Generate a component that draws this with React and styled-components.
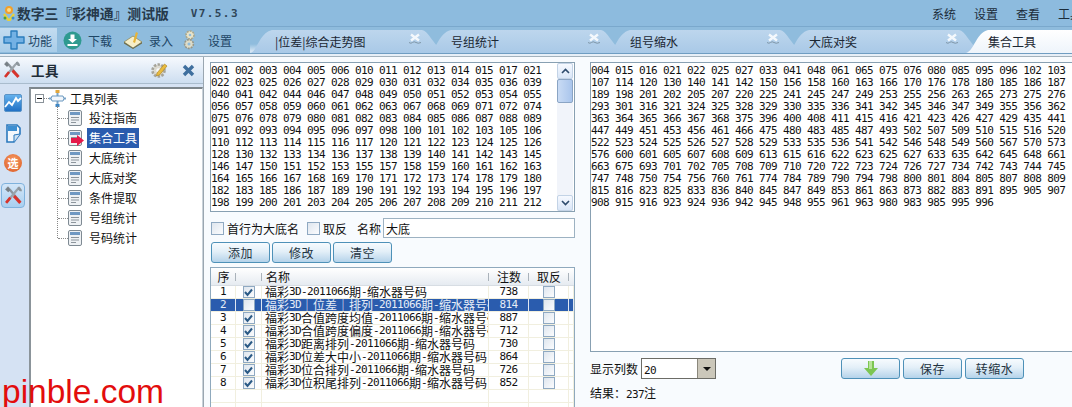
import React from 'react';
import styled, { createGlobalStyle } from 'styled-components';

const CJK = `"Noto Sans CJK SC", "Liberation Sans", sans-serif`;
const MONO = `"DejaVu Sans Mono", "Liberation Mono", monospace`;

const leftNumbers = [
    '001 002 003 004 005 006 010 011 012 013 014 015 017 021',
    '022 023 025 026 027 028 029 030 031 032 034 035 036 039',
    '040 041 042 044 046 047 048 049 050 051 052 053 054 055',
    '056 057 058 059 060 061 062 063 067 068 069 071 072 074',
    '075 076 078 079 080 081 082 083 084 085 086 087 088 089',
    '091 092 093 094 095 096 097 098 100 101 102 103 105 106',
    '110 112 113 114 115 116 117 120 121 122 123 124 125 126',
    '128 130 132 133 134 136 137 138 139 140 141 142 143 145',
    '146 147 150 151 152 153 155 157 158 159 160 161 162 163',
    '164 165 166 167 168 169 170 171 172 173 174 178 179 180',
    '182 183 185 186 187 189 190 191 192 193 194 195 196 197',
    '198 199 200 201 203 204 205 206 207 208 209 210 211 212',
];

const rightNumbers = [
    '004 015 016 021 022 025 027 033 041 048 061 065 075 076 080 085 095 096 102 103',
    '107 114 120 130 140 141 142 150 156 158 160 163 166 170 176 178 180 185 186 187',
    '189 198 201 202 205 207 220 225 241 245 247 249 253 255 256 263 265 273 275 276',
    '293 301 316 321 324 325 328 329 330 335 336 341 342 345 346 347 349 355 356 362',
    '363 364 365 366 367 368 375 396 400 408 411 415 416 421 423 426 427 429 435 441',
    '447 449 451 453 456 461 466 475 480 483 485 487 493 502 507 509 510 515 516 520',
    '522 523 524 525 526 527 528 529 533 535 536 541 542 546 548 549 560 567 570 573',
    '576 600 601 605 607 608 609 613 615 616 622 623 625 627 633 635 642 645 648 661',
    '663 675 693 701 702 705 708 709 710 720 722 723 724 726 727 734 742 743 744 745',
    '747 748 750 754 756 760 761 774 784 789 790 794 798 800 801 804 805 807 808 809',
    '815 816 823 825 833 836 840 845 847 849 853 861 863 873 882 883 891 895 905 907',
    '908 915 916 923 924 936 942 945 948 955 961 963 980 983 985 995 996',
];

const schemes = [
    { id: 1, name: '福彩3D-2011066期-缩水器号码', count: 738, checked: true },
    { id: 2, name: '福彩3D｜位差｜排列-2011066期-缩水器号码', count: 814, checked: false, selected: true },
    { id: 3, name: '福彩3D合值跨度均值-2011066期-缩水器号码', count: 887, checked: true },
    { id: 4, name: '福彩3D合值跨度偏度-2011066期-缩水器号码', count: 712, checked: true },
    { id: 5, name: '福彩3D距离排列-2011066期-缩水器号码', count: 730, checked: true },
    { id: 6, name: '福彩3D位差大中小-2011066期-缩水器号码', count: 864, checked: true },
    { id: 7, name: '福彩3D位合排列-2011066期-缩水器号码', count: 726, checked: true },
    { id: 8, name: '福彩3D位积尾排列-2011066期-缩水器号码', count: 852, checked: true },
];

const treeItems = ['投注指南', '集合工具', '大底统计', '大底对奖', '条件提取', '号组统计', '号码统计'];
const tabs = ['|位差|综合走势图', '号组统计', '组号缩水', '大底对奖'];

const GlobalStyle = createGlobalStyle`
    html, body {
        margin: 0;
        padding: 0;
        overflow: hidden;
        background: #f8fbfe;
    }
`;

const Shell = styled.div`
    position: relative;
    width: 1072px;
    height: 407px;
    overflow: hidden;
    display: flex;
    flex-direction: column;
    background: #f8fbfe;
    color: #111;
    font-family: ${CJK};
    font-size: 12px;
`;

const TitleBar = styled.div`
    height: 27px;
    flex: none;
    display: flex;
    align-items: center;
    padding-left: 3px;
    background: #8dbbde;
    border-bottom: 1px solid #7aa8cc;
    box-sizing: border-box;
`;

const AppName = styled.div`
    margin-left: 1px;
    font-size: 13.8px;
    font-weight: 700;
    color: #26394b;
    white-space: pre;
`;

const Version = styled.div`
    margin-left: 22px;
    font-family: ${MONO};
    font-size: 11px;
    font-weight: 700;
    letter-spacing: 1.4px;
    color: #2f4557;
`;

const Menu = styled.nav`
    margin-left: auto;
    margin-right: -10px;
    display: flex;
    gap: 18px;
    color: #1c2c3a;
`;

const ToolRow = styled.div`
    height: 27px;
    flex: none;
    display: flex;
    background: #8fbcdd;
    border-bottom: 1px solid #6f9dc2;
    box-sizing: border-box;
    overflow: hidden;
`;

const ToolButtons = styled.div`
    width: 250px;
    flex: none;
    display: flex;
    align-items: center;
`;

const ToolButton = styled.div`
    height: 24px;
    width: ${({ $width }) => $width}px;
    flex: none;
    display: flex;
    align-items: center;
    gap: ${({ $gap }) => $gap}px;
    padding-left: ${({ $pad }) => $pad}px;
    box-sizing: border-box;
    color: #1e4666;
    background: ${({ $active }) => ($active ? 'linear-gradient(#c3dcf0, #a9cde9)' : 'none')};
`;

const TabStrip = styled.div`
    flex: 1;
    display: flex;
    align-items: flex-end;
    background: linear-gradient(#8fbcdd 0, #8fbcdd 17px, #d3e4f3 24px);
`;

const Tab = styled.div`
    width: 193px;
    height: 23px;
    flex: none;
    margin-right: -14px;
    display: flex;
    align-items: center;
    padding-left: ${({ $pad }) => $pad}px;
    box-sizing: border-box;
    position: relative;
    color: #1b2733;
    background: linear-gradient(#bdd6ed, #a9c9e7);
    clip-path: path('M0 23 C7 22 9 3 22 0 L172 0 C178 1 183 13 193 23 Z');
`;

const ActiveTab = styled(Tab)`
    width: 120px;
    margin-right: 0;
    background: linear-gradient(#ffffff, #eef4fb);
    clip-path: path('M0 23 C8 21 10 3 22 0 L120 0 L120 23 Z');
`;

const TabClose = styled.svg`
    position: absolute;
    right: 21px;
    top: 3px;
    width: 14px;
    height: 12px;
`;

const Rule = styled.div`
    height: 2px;
    flex: none;
    background: #e7eff7;
    border-bottom: 1px solid #a3b2bd;
`;

const Body = styled.div`
    flex: 1;
    display: flex;
    min-height: 0;
`;

const LeftPanel = styled.aside`
    width: 204px;
    flex: none;
    display: flex;
    flex-direction: column;
    border-right: 1px solid #9aa6b0;
    box-sizing: border-box;
`;

const PanelHeader = styled.div`
    height: 27px;
    flex: none;
    display: flex;
    align-items: center;
    padding-left: 3px;
    background: linear-gradient(#f6f9fd, #cddef0);
    border-bottom: 1px solid #a9bccd;
    box-sizing: border-box;
`;

const PanelTitle = styled.div`
    margin-left: 10px;
    font-size: 13.5px;
    font-weight: 700;
    letter-spacing: 0.5px;
    color: #1e2c38;
`;

const PanelGear = styled.svg`
    margin-left: auto;
    width: 18px;
    height: 18px;
`;

const PanelClose = styled.svg`
    margin: 0 8px 0 14px;
    width: 13px;
    height: 13px;
`;

const PanelBody = styled.div`
    flex: 1;
    display: flex;
    min-height: 0;
    background: #d5e2f3;
`;

const SideBar = styled.div`
    width: 29px;
    flex: none;
    display: flex;
    flex-direction: column;
    align-items: flex-start;
    padding: 4px 0 0 1px;
    box-sizing: border-box;
`;

const SideButton = styled.div`
    width: 24px;
    height: ${({ $height }) => $height}px;
    flex: none;
    display: flex;
    align-items: center;
    justify-content: center;
    box-sizing: border-box;
    border-radius: 4px;
    ${({ $active }) => $active && `
        margin-top: 5px;
        background: linear-gradient(#d3e6f8, #a8cff0);
        border: 1px solid #7fb2dd;
    `}
`;

const ElectBadge = styled.div`
    width: 18px;
    height: 18px;
    border-radius: 50%;
    background: radial-gradient(circle at 50% 35%, #f59a62, #dc5a24);
    color: #fff;
    font-size: 11px;
    font-weight: 700;
    line-height: 18px;
    text-align: center;
`;

const TreeBox = styled.div`
    flex: 1;
    margin-top: 3px;
    background: #fff;
    border-top: 2px solid #7d868c;
    border-left: 2px solid #8b949a;
    border-right: 1px solid #c9d2da;
    box-sizing: border-box;
    padding: 0 0 0 4px;
`;

const TreeRoot = styled.div`
    height: 20px;
    margin-top: -1px;
    display: flex;
    align-items: center;
`;

const Expander = styled.div`
    width: 7px;
    height: 7px;
    flex: none;
    border: 1px solid #8a9299;
    display: flex;
    align-items: center;
    justify-content: center;
    &::after {
        content: '';
        width: 5px;
        height: 1px;
        background: #111;
    }
`;

const RootLink = styled.div`
    width: 5px;
    flex: none;
    border-top: 1px dotted #888;
`;

const RootLabel = styled.span`
    margin-left: 4px;
`;

const TreeList = styled.div`
    position: relative;
    margin-left: 22px;
    &::before {
        content: '';
        position: absolute;
        left: 0;
        top: -2px;
        bottom: 10px;
        border-left: 1px dotted #888;
    }
`;

const TreeItem = styled.div`
    height: 20px;
    display: flex;
    align-items: center;
    &::before {
        content: '';
        width: 10px;
        flex: none;
        margin-left: 1px;
        border-top: 1px dotted #888;
    }
`;

const TreeIconWrap = styled.div`
    position: relative;
    width: 14px;
    height: 16px;
    flex: none;
`;

const TreeArrow = styled.svg`
    position: absolute;
    left: 3px;
    top: 5px;
    width: 13px;
    height: 11px;
`;

const TreeLabel = styled.span`
    margin-left: 5px;
    padding: 0 2px;
    height: 20px;
    line-height: 20px;
    ${({ $selected }) => $selected && 'background: #2a5cae; color: #fff;'}
`;

const Center = styled.main`
    width: 379px;
    flex: none;
    padding: 5px 8px 0 6px;
    box-sizing: border-box;
    display: flex;
    flex-direction: column;
`;

const ListBox = styled.div`
    height: 150px;
    flex: none;
    display: flex;
    background: #fff;
    border: 1px solid #88a0b2;
    box-sizing: border-box;
`;

const NumberArea = styled.div`
    flex: 1;
    padding-top: 2px;
`;

const NumberLine = styled.div`
    height: 12px;
    font-family: ${MONO};
    font-size: 11px;
    letter-spacing: -0.62px;
    line-height: 12px;
    white-space: pre;
    color: #111;
`;

const ScrollTrack = styled.div`
    width: 16px;
    margin-right: 1px;
    flex: none;
    display: flex;
    flex-direction: column;
    background: #f1f4fa;
`;

const ScrollButton = styled.div`
    height: 16px;
    flex: none;
    display: flex;
    align-items: center;
    justify-content: center;
    box-sizing: border-box;
    background: linear-gradient(#f6f9ff, #d9e6f7);
    border: 1px solid #c3d3e6;
    border-radius: 2px;
`;

const ScrollThumb = styled.div`
    height: 24px;
    flex: none;
    box-sizing: border-box;
    background: linear-gradient(90deg, #c9dbf4, #a9c5ec);
    border: 1px solid #8aa4c4;
    border-radius: 2px;
`;

const ScrollGap = styled.div`
    flex: 1;
`;

const OptionRow = styled.div`
    height: 20px;
    flex: none;
    margin-top: 6px;
    display: flex;
    align-items: center;
    padding-left: 1px;
`;

const Box = styled.span`
    width: ${({ $size }) => $size || 13}px;
    height: ${({ $size }) => $size || 13}px;
    flex: none;
    margin-left: ${({ $left }) => $left || 0}px;
    display: inline-flex;
    align-items: center;
    justify-content: center;
    box-sizing: border-box;
    border: 1px solid #8fa9c2;
    background: linear-gradient(135deg, #dfe6ee, #fbfcfe);
`;

const OptionLabel = styled.span`
    margin-left: ${({ $left }) => $left}px;
    white-space: nowrap;
`;

const NameInput = styled.div`
    flex: 1;
    height: 20px;
    margin-left: 2px;
    padding-left: 2px;
    line-height: 19px;
    box-sizing: border-box;
    background: #fff;
    border: 1px solid #9db2c2;
`;

const ButtonRow = styled.div`
    height: 21px;
    flex: none;
    margin-top: 4px;
    display: flex;
    gap: 2px;
    padding-left: 1px;
`;

const Btn = styled.div`
    width: 59px;
    height: 21px;
    flex: none;
    display: flex;
    align-items: center;
    justify-content: center;
    box-sizing: border-box;
    border: 1px solid #4e91b8;
    border-radius: 3px;
    background: linear-gradient(#f7fbfe, #e3eff8 45%, #b5d3ea);
    color: #23333f;
    letter-spacing: 0.5px;
`;

const Table = styled.div`
    flex: 1;
    margin-top: 4px;
    background: #fff;
    border: 1px solid #8fa9bd;
    border-bottom: none;
    box-sizing: border-box;
`;

const columns = '25px 26px 227px 40px 40px 1fr';

const HeaderRow = styled.div`
    height: 18px;
    display: grid;
    grid-template-columns: ${columns};
    background: linear-gradient(#ffffff, #e6ebf1);
    border-bottom: 1px solid #d7dde3;
    box-sizing: border-box;
`;

const HeaderCell = styled.div`
    display: flex;
    align-items: center;
    justify-content: ${({ $left }) => ($left ? 'flex-start' : 'center')};
    padding-left: ${({ $left }) => ($left ? 4 : 0)}px;
    position: relative;
    &:not(:last-child)::after {
        content: '';
        position: absolute;
        right: 0;
        top: 5px;
        height: 8px;
        border-right: 1px solid #aab2ba;
    }
`;

const Row = styled.div`
    height: 13px;
    display: grid;
    grid-template-columns: ${columns};
    box-sizing: border-box;
    border-bottom: 1px solid #f1efdf;
    background: ${({ $selected }) => ($selected ? '#2a5cae' : '#fff')};
    color: ${({ $selected }) => ($selected ? '#e6edf7' : '#111')};
`;

const Cell = styled.div`
    display: flex;
    align-items: center;
    justify-content: center;
    overflow: hidden;
    white-space: pre;
    line-height: 12px;
    border-right: 1px solid ${({ $selected }) => ($selected ? '#dfe7f2' : '#f1efdf')};
`;

const NameCell = styled(Cell)`
    justify-content: flex-start;
    padding-left: 3px;
`;

const Latin = styled.span`
    font-family: ${MONO};
    font-size: 11px;
    letter-spacing: -0.62px;
`;

const BottomBar = styled.div`
    height: 21px;
    margin-top: 6px;
    padding-right: 48px;
    display: flex;
    align-items: center;
`;

const SelectBox = styled.div`
    width: 75px;
    height: 21px;
    margin-left: 3px;
    display: flex;
    box-sizing: border-box;
    background: #fff;
    border: 1px solid #6c6c66;
`;

const SelectValue = styled.div`
    flex: 1;
    padding-left: 2px;
    line-height: 19px;
`;

const SelectArrow = styled.div`
    width: 17px;
    display: flex;
    align-items: center;
    justify-content: center;
    background: #cbc7ba;
    border-left: 1px solid #8a877c;
    &::after {
        content: '';
        border: 4px solid transparent;
        border-top: 4px solid #111;
        border-bottom: none;
    }
`;

const ActionGroup = styled.div`
    margin-left: auto;
    display: flex;
    gap: 3px;
`;

const ResultLine = styled.div`
    margin-top: 5px;
    height: 18px;
    line-height: 18px;
`;

const RightPane = styled.section`
    flex: 1;
    padding: 5px 0 0 7px;
    min-width: 0;
    display: flex;
    flex-direction: column;
`;

const OutputBox = styled.div`
    height: 290px;
    flex: none;
    background: #fff;
    border-top: 1px solid #88a0b2;
    border-left: 1px solid #88a0b2;
    border-bottom: 1px solid #88a0b2;
    box-sizing: border-box;
    padding-top: 2px;
`;

const Watermark = styled.div`
    position: absolute;
    left: 2px;
    bottom: -4px;
    font-family: "Liberation Sans", Arial, sans-serif;
    font-size: 33.5px;
    line-height: 38px;
    color: #e30d0d;
`;

// ascii runs in the old ui are half width, so they get the small mono face
function Mixed({ text }) {
    return text.split(/([\x20-\x7e]+)/).map((part, i) =>
        /^[\x20-\x7e]+$/.test(part) ? <Latin key={i}>{part}</Latin> : part
    );
}

function LogoIcon() {
    return (
        <svg width="13" height="16" viewBox="0 0 13 16">
            <circle cx="6" cy="5" r="4" fill="#f1a02c" />
            <circle cx="6" cy="5" r="2" fill="#fbdc8a" />
            <path d="M1 9 L6 16 L11 9" fill="none" stroke="#e8d13a" strokeWidth="2.4" />
            <circle cx="2" cy="13" r="1.5" fill="#4f9f3c" />
            <circle cx="10" cy="13" r="1.5" fill="#3b8fd0" />
        </svg>
    );
}

function PlusIcon() {
    return (
        <svg width="22" height="20" viewBox="0 0 22 20">
            <path d="M8 1 H14 V7 H21 V13 H14 V19 H8 V13 H1 V7 H8 Z" fill="#73b1e4" stroke="#2b7dbd" strokeWidth="1.4" strokeLinejoin="round" />
        </svg>
    );
}

function DownloadIcon() {
    return (
        <svg width="19" height="19" viewBox="0 0 19 19">
            <circle cx="9.5" cy="9.5" r="9" fill="#2f9a90" />
            <path d="M7.5 3.5 H11.5 V8 H14 L9.5 12 L5 8 H7.5 Z" fill="#fff" />
            <rect x="4.5" y="13" width="10" height="2" fill="#fff" />
        </svg>
    );
}

function EntryIcon() {
    return (
        <svg width="20" height="18" viewBox="0 0 20 18">
            <path d="M1 11 L10 5 L19 11 L10 17 Z" fill="#f6eec8" stroke="#8f8a5c" strokeWidth="0.8" />
            <path d="M10 11 L13 1 L15 2 L12 12 Z" fill="#e6b437" />
            <path d="M1 11 L10 17 L19 11 V12.5 L10 18 L1 12.5 Z" fill="#6d6b49" />
        </svg>
    );
}

function GearsIcon() {
    return (
        <svg width="14" height="20" viewBox="0 0 14 20">
            <circle cx="7" cy="5" r="4" fill="#e9e4c9" stroke="#a8a68c" strokeWidth="1.6" strokeDasharray="2 1" />
            <circle cx="7" cy="5" r="1.3" fill="#8fbcdd" />
            <circle cx="6" cy="14" r="4.4" fill="#dedcc8" stroke="#96978a" strokeWidth="1.6" strokeDasharray="2 1" />
            <circle cx="6" cy="14" r="1.5" fill="#8fbcdd" />
        </svg>
    );
}

function CloseMark() {
    return (
        <TabClose viewBox="0 0 14 12">
            <path d="M3 1.5 L11 7.5 M11 1.5 L3 7.5" stroke="#f4f8fc" strokeWidth="2.4" />
            <path d="M1 9.5 Q3 11 4.5 9.5 T8 9.5 T13 9.5" fill="none" stroke="#7f96a8" strokeWidth="1" />
        </TabClose>
    );
}

function ToolsIcon({ size = 18 }) {
    return (
        <svg width={size} height={size} viewBox="0 0 18 18">
            <path d="M3 1 L6 4 L15 15" stroke="#8d969d" strokeWidth="2.2" fill="none" />
            <path d="M1 3 L4 1 L6 4 L4 6 Z" fill="#777f85" />
            <path d="M15 1 L12 4 L3 15" stroke="#9aa3aa" strokeWidth="2.2" fill="none" />
            <path d="M13 1 A4 4 0 0 1 17 5 L15 5 L13 3 Z" fill="#8d969d" />
            <path d="M9.5 9.5 L15.5 16" stroke="#d8342c" strokeWidth="3" />
            <path d="M6 11 L2 16" stroke="#d8342c" strokeWidth="2.6" />
        </svg>
    );
}

function GearPencil() {
    return (
        <PanelGear viewBox="0 0 18 18">
            <circle cx="8.5" cy="9.5" r="6" fill="#dcdad0" stroke="#a6a49a" strokeWidth="2.6" strokeDasharray="2.4 1.4" />
            <circle cx="8.5" cy="9.5" r="2.2" fill="#f6f9fd" />
            <path d="M7 12 L14.5 3 L17 5 L9.5 14 L6.5 15 Z" fill="#e9bb3f" stroke="#a67d1a" strokeWidth="0.6" />
        </PanelGear>
    );
}

function ChartIcon() {
    return (
        <svg width="18" height="18" viewBox="0 0 18 18">
            <defs>
                <linearGradient id="chartFill" x1="0" y1="0" x2="0" y2="1">
                    <stop offset="0" stopColor="#66b3ee" />
                    <stop offset="1" stopColor="#1f6fc4" />
                </linearGradient>
            </defs>
            <rect x="0.5" y="0.5" width="17" height="17" rx="1.5" fill="url(#chartFill)" stroke="#5a93c6" />
            <path d="M1 13 L5 8 L8 11 L12 4 L14 7 L17 4" fill="none" stroke="#fff" strokeWidth="1.8" />
        </svg>
    );
}

function SideDocIcon() {
    return (
        <svg width="17" height="19" viewBox="0 0 17 19">
            <path d="M2 1 H12 L15 4 V10 L9 18 H2 Z" fill="#f4f8fc" stroke="#2b79bd" strokeWidth="1.6" />
            <rect x="3" y="2" width="9" height="5" fill="#3d8fd2" />
            <path d="M9 18 L9 11 L15 10" fill="#cfe2f2" stroke="#2b79bd" />
        </svg>
    );
}

function RootIcon() {
    return (
        <svg width="17" height="17" viewBox="0 0 17 17">
            <path d="M8.5 0 V17 M0 8.5 H17" stroke="#7ba5c9" strokeWidth="2" />
            <path d="M3 6 H14 L15 8.5 L14 11 H3 L2 8.5 Z" fill="#f1f6fb" stroke="#6a98bf" />
            <rect x="6.5" y="0" width="4" height="3" fill="#e1a63c" />
            <rect x="6.5" y="14" width="4" height="3" fill="#3f86c4" />
        </svg>
    );
}

function DocIcon() {
    return (
        <svg width="14" height="16" viewBox="0 0 14 16">
            <rect x="0.5" y="0.5" width="13" height="15" rx="1.5" fill="#eef1f4" stroke="#7f8a93" />
            <rect x="2" y="2" width="10" height="3" fill="#6f98c2" />
            <path d="M3 7.5 H11 M3 10 H11 M3 12.5 H8" stroke="#8d959c" strokeWidth="1" />
        </svg>
    );
}

function Chevron({ up }) {
    return (
        <svg width="9" height="6" viewBox="0 0 9 6">
            <path d={up ? 'M1 5 L4.5 1.5 L8 5' : 'M1 1 L4.5 4.5 L8 1'} fill="none" stroke="#2c4a6c" strokeWidth="1.6" />
        </svg>
    );
}

function Tick() {
    return (
        <svg width="9" height="9" viewBox="0 0 9 9">
            <path d="M1 4 L3.5 7 L8 1.5" fill="none" stroke="#2b5a86" strokeWidth="2" />
        </svg>
    );
}

function GreenDown() {
    return (
        <svg width="14" height="15" viewBox="0 0 14 15">
            <path d="M4 0 H10 V7 H14 L7 15 L0 7 H4 Z" fill="#7cc653" />
            <path d="M5 0 H8 V8 H5 Z" fill="#b8e49a" />
        </svg>
    );
}

function App() {
    return (
        <Shell>
            <GlobalStyle />
            <TitleBar>
                <LogoIcon />
                <AppName>数字三『彩神通』测试版</AppName>
                <Version>V7.5.3</Version>
                <Menu>
                    <span>系统</span>
                    <span>设置</span>
                    <span>查看</span>
                    <span>工具</span>
                </Menu>
            </TitleBar>
            <ToolRow>
                <ToolButtons>
                    <ToolButton $active $width={57} $gap={3} $pad={3}><PlusIcon />功能</ToolButton>
                    <ToolButton $width={66} $gap={6} $pad={6}><DownloadIcon />下载</ToolButton>
                    <ToolButton $width={60} $gap={6} $pad={0}><EntryIcon />录入</ToolButton>
                    <ToolButton $width={67} $gap={11} $pad={0}><GearsIcon />设置</ToolButton>
                </ToolButtons>
                <TabStrip>
                    {tabs.map((t, i) => (
                        <Tab key={t} $pad={i === 0 ? 25 : 22}>{t}<CloseMark /></Tab>
                    ))}
                    <ActiveTab $pad={22}>集合工具</ActiveTab>
                </TabStrip>
            </ToolRow>
            <Rule />
            <Body>
                <LeftPanel>
                    <PanelHeader>
                        <ToolsIcon />
                        <PanelTitle>工具</PanelTitle>
                        <GearPencil />
                        <PanelClose viewBox="0 0 13 13">
                            <path d="M2 2 L11 11 M11 2 L2 11" stroke="#3f6f9e" strokeWidth="3.4" />
                        </PanelClose>
                    </PanelHeader>
                    <PanelBody>
                        <SideBar>
                            <SideButton $height={30}><ChartIcon /></SideButton>
                            <SideButton $height={30}><SideDocIcon /></SideButton>
                            <SideButton $height={30}><ElectBadge>选</ElectBadge></SideButton>
                            <SideButton $active $height={25}><ToolsIcon size={19} /></SideButton>
                        </SideBar>
                        <TreeBox>
                            <TreeRoot>
                                <Expander />
                                <RootLink />
                                <RootIcon />
                                <RootLabel>工具列表</RootLabel>
                            </TreeRoot>
                            <TreeList>
                                {treeItems.map((item) => (
                                    <TreeItem key={item}>
                                        <TreeIconWrap>
                                            <DocIcon />
                                            {item === '集合工具' && (
                                                <TreeArrow viewBox="0 0 13 11">
                                                    <path d="M0 3 H6 V0 L13 5.5 L6 11 V8 H0 Z" fill="#e5194a" />
                                                </TreeArrow>
                                            )}
                                        </TreeIconWrap>
                                        <TreeLabel $selected={item === '集合工具'}>{item}</TreeLabel>
                                    </TreeItem>
                                ))}
                            </TreeList>
                        </TreeBox>
                    </PanelBody>
                </LeftPanel>
                <Center>
                    <ListBox>
                        <NumberArea>
                            {leftNumbers.map((line) => <NumberLine key={line}>{line}</NumberLine>)}
                        </NumberArea>
                        <ScrollTrack>
                            <ScrollButton><Chevron up /></ScrollButton>
                            <ScrollThumb />
                            <ScrollGap />
                            <ScrollButton><Chevron /></ScrollButton>
                        </ScrollTrack>
                    </ListBox>
                    <OptionRow>
                        <Box />
                        <OptionLabel $left={3}>首行为大底名</OptionLabel>
                        <Box $left={8} />
                        <OptionLabel $left={3}>取反</OptionLabel>
                        <OptionLabel $left={10}>名称</OptionLabel>
                        <NameInput>大底</NameInput>
                    </OptionRow>
                    <ButtonRow>
                        <Btn>添加</Btn>
                        <Btn>修改</Btn>
                        <Btn>清空</Btn>
                    </ButtonRow>
                    <Table>
                        <HeaderRow>
                            <HeaderCell>序</HeaderCell>
                            <HeaderCell />
                            <HeaderCell $left>名称</HeaderCell>
                            <HeaderCell>注数</HeaderCell>
                            <HeaderCell>取反</HeaderCell>
                            <HeaderCell />
                        </HeaderRow>
                        {schemes.map((s) => (
                            <Row key={s.id} $selected={s.selected}>
                                <Cell $selected={s.selected}><Latin>{s.id}</Latin></Cell>
                                <Cell $selected={s.selected}><Box $size={12}>{s.checked && <Tick />}</Box></Cell>
                                <NameCell $selected={s.selected}><Mixed text={s.name} /></NameCell>
                                <Cell $selected={s.selected}><Latin>{s.count}</Latin></Cell>
                                <Cell $selected={s.selected}><Box $size={12} /></Cell>
                                <Cell $selected={s.selected} />
                            </Row>
                        ))}
                        <Row><Cell /><Cell /><Cell /><Cell /><Cell /><Cell /></Row>
                        <Row><Cell /><Cell /><Cell /><Cell /><Cell /><Cell /></Row>
                    </Table>
                </Center>
                <RightPane>
                    <OutputBox>
                        {rightNumbers.map((line) => <NumberLine key={line}>{line}</NumberLine>)}
                    </OutputBox>
                    <BottomBar>
                        <span>显示列数</span>
                        <SelectBox>
                            <SelectValue><Latin>20</Latin></SelectValue>
                            <SelectArrow />
                        </SelectBox>
                        <ActionGroup>
                            <Btn><GreenDown /></Btn>
                            <Btn>保存</Btn>
                            <Btn>转缩水</Btn>
                        </ActionGroup>
                    </BottomBar>
                    <ResultLine><Mixed text="结果：237注" /></ResultLine>
                </RightPane>
            </Body>
            <Watermark>pinble.com</Watermark>
        </Shell>
    );
}

export default App;
